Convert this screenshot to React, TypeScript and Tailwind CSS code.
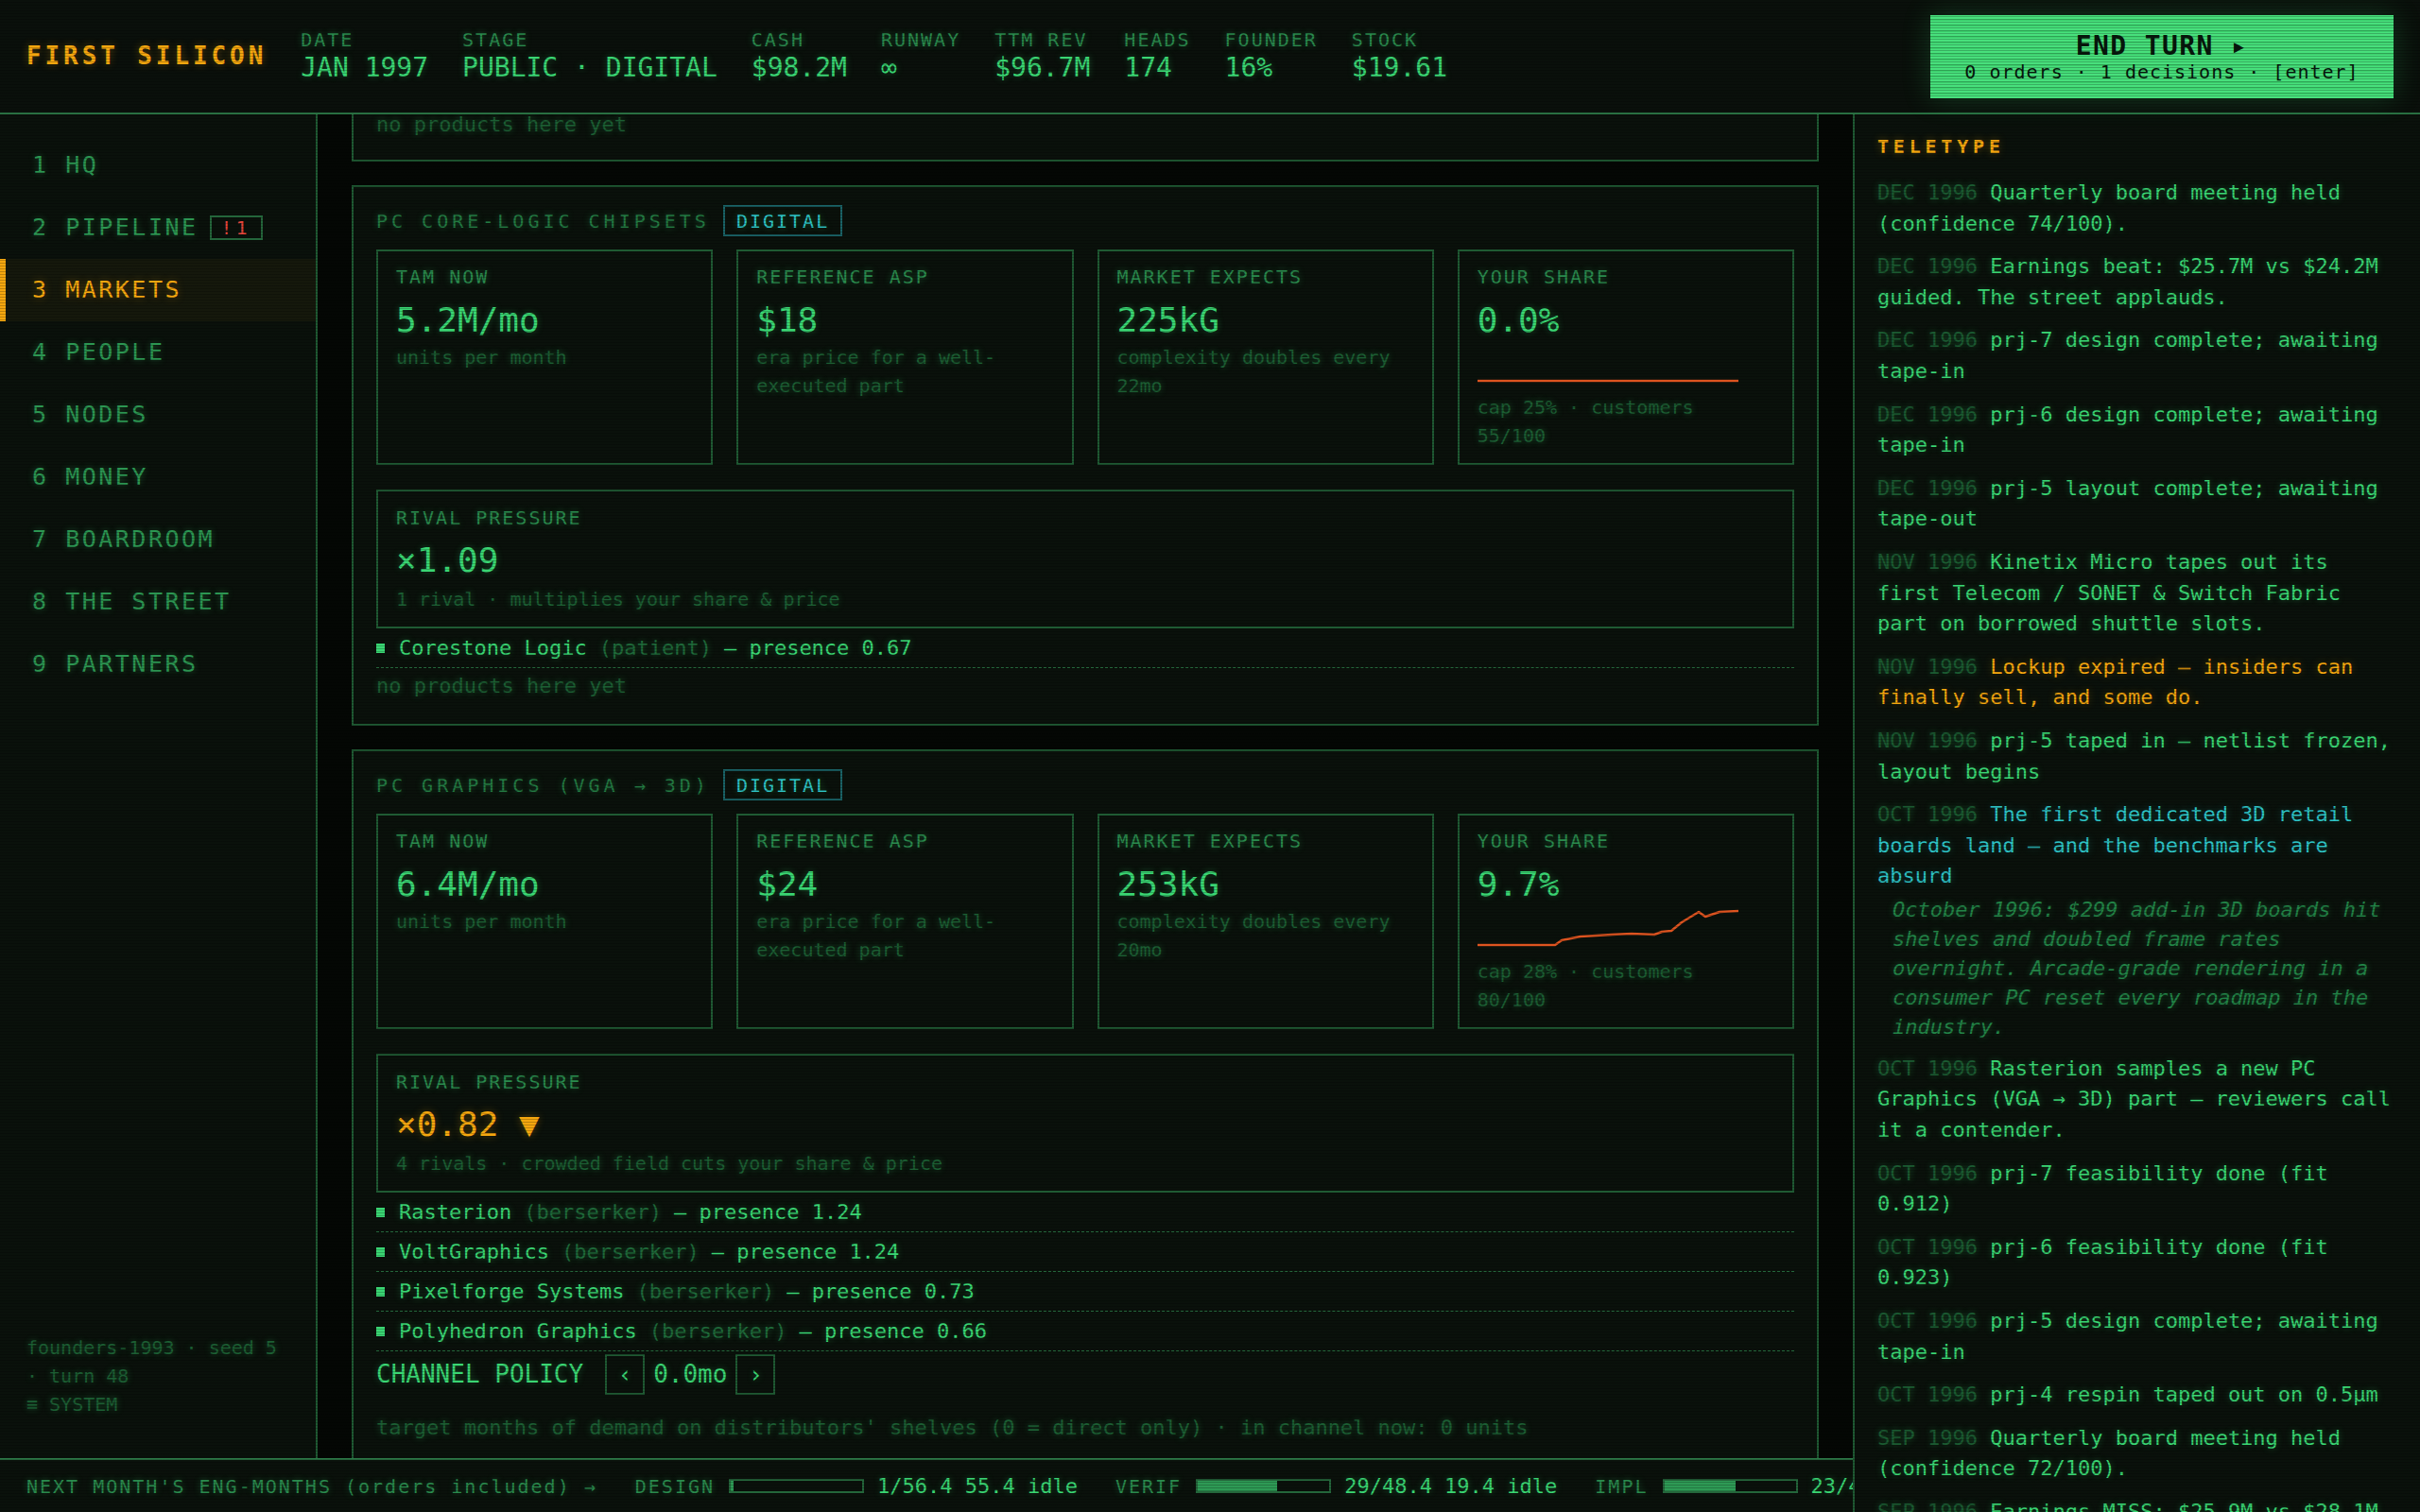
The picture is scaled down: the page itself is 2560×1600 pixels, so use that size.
import React from "react";

const headerStats = [
  { label: "DATE", value: "JAN 1997" },
  { label: "STAGE", value: "PUBLIC · DIGITAL" },
  { label: "CASH", value: "$98.2M" },
  { label: "RUNWAY", value: "∞" },
  { label: "TTM REV", value: "$96.7M" },
  { label: "HEADS", value: "174" },
  { label: "FOUNDER", value: "16%" },
  { label: "STOCK", value: "$19.61" },
];

const navItems = [
  "HQ",
  "PIPELINE",
  "MARKETS",
  "PEOPLE",
  "NODES",
  "MONEY",
  "BOARDROOM",
  "THE STREET",
  "PARTNERS",
];

type Tone = "ok" | "warn" | "info";

const teletype: { date: string; text: string; tone?: Tone; note?: string }[] = [
  { date: "DEC 1996", text: "Quarterly board meeting held (confidence 74/100)." },
  { date: "DEC 1996", text: "Earnings beat: $25.7M vs $24.2M guided. The street applauds." },
  { date: "DEC 1996", text: "prj-7 design complete; awaiting tape-in" },
  { date: "DEC 1996", text: "prj-6 design complete; awaiting tape-in" },
  { date: "DEC 1996", text: "prj-5 layout complete; awaiting tape-out" },
  {
    date: "NOV 1996",
    text: "Kinetix Micro tapes out its first Telecom / SONET & Switch Fabric part on borrowed shuttle slots.",
  },
  { date: "NOV 1996", text: "Lockup expired — insiders can finally sell, and some do.", tone: "warn" },
  { date: "NOV 1996", text: "prj-5 taped in — netlist frozen, layout begins" },
  {
    date: "OCT 1996",
    text: "The first dedicated 3D retail boards land — and the benchmarks are absurd",
    tone: "info",
    note: "October 1996: $299 add-in 3D boards hit shelves and doubled frame rates overnight. Arcade-grade rendering in a consumer PC reset every roadmap in the industry.",
  },
  {
    date: "OCT 1996",
    text: "Rasterion samples a new PC Graphics (VGA → 3D) part — reviewers call it a contender.",
  },
  { date: "OCT 1996", text: "prj-7 feasibility done (fit 0.912)" },
  { date: "OCT 1996", text: "prj-6 feasibility done (fit 0.923)" },
  { date: "OCT 1996", text: "prj-5 design complete; awaiting tape-in" },
  { date: "OCT 1996", text: "prj-4 respin taped out on 0.5µm" },
  { date: "SEP 1996", text: "Quarterly board meeting held (confidence 72/100)." },
  { date: "SEP 1996", text: "Earnings MISS: $25.9M vs $28.1M guided. Shares slide." },
];

type Rival = { name: string; style: string; presence: string };

type Market = {
  title: string;
  tam: string;
  asp: string;
  expects: string;
  doubles: string;
  share: string;
  points: string;
  cap: string;
  customers: string;
  pressure: string;
  pressureSub: string;
  pressureWarn?: boolean;
  rivals: Rival[];
  hasProducts: boolean;
};

const markets: Market[] = [
  {
    title: "PC CORE-LOGIC CHIPSETS",
    tam: "5.2M/mo",
    asp: "$18",
    expects: "225kG",
    doubles: "22mo",
    share: "0.0%",
    points: "0,42 276,42",
    cap: "25%",
    customers: "55/100",
    pressure: "×1.09",
    pressureSub: "1 rival · multiplies your share & price",
    rivals: [{ name: "Corestone Logic", style: "patient", presence: "0.67" }],
    hasProducts: false,
  },
  {
    title: "PC GRAPHICS (VGA → 3D)",
    tam: "6.4M/mo",
    asp: "$24",
    expects: "253kG",
    doubles: "20mo",
    share: "9.7%",
    points:
      "0,42 82,42 89,37 109,33 142,31 163,30 187,31 195,28 205,27 216,18 234,7 241,12 256,7 276,6",
    cap: "28%",
    customers: "80/100",
    pressure: "×0.82 ▼",
    pressureSub: "4 rivals · crowded field cuts your share & price",
    pressureWarn: true,
    rivals: [
      { name: "Rasterion", style: "berserker", presence: "1.24" },
      { name: "VoltGraphics", style: "berserker", presence: "1.24" },
      { name: "Pixelforge Systems", style: "berserker", presence: "0.73" },
      { name: "Polyhedron Graphics", style: "berserker", presence: "0.66" },
    ],
    hasProducts: true,
  },
];

function StatBox({ label, value, children }: { label: string; value: string; children: React.ReactNode }) {
  return (
    <div className="h-[228px] border-2 border-[#1f5a33] pl-[19px] pr-[24px] pt-[17px]">
      <div className="text-[20px] leading-[20px] tracking-[0.1em] text-[#2a8a4d]">{label}</div>
      <div className="mt-[14px] text-[36px] leading-[44px] text-[#3ad673]">{value}</div>
      {children}
    </div>
  );
}

function Sub({ children, className = "" }: { children: React.ReactNode; className?: string }) {
  return <div className={`text-[20px] leading-[30px] text-[#1c5e33] ${className}`}>{children}</div>;
}

function MarketCard({ m }: { m: Market }) {
  return (
    <div className="border-2 border-[#1f5a33] bg-[#0a110b] px-[24px] pt-[19px] pb-[24px]">
      <div className="mb-[14px] flex h-[33px] items-center gap-[14px]">
        <span className="text-[20px] tracking-[0.2em] text-[#237a42]">{m.title}</span>
        <span className="flex h-[33px] items-center border-2 border-[#1a6468] px-[12px] text-[20px] tracking-[0.1em] text-[#2ec4c6]">
          DIGITAL
        </span>
      </div>

      <div className="grid grid-cols-4 gap-[25px]">
        <StatBox label="TAM NOW" value={m.tam}>
          <Sub className="mt-[2px]">units per month</Sub>
        </StatBox>
        <StatBox label="REFERENCE ASP" value={m.asp}>
          <Sub className="mt-[2px]">era price for a well-executed part</Sub>
        </StatBox>
        <StatBox label="MARKET EXPECTS" value={m.expects}>
          <Sub className="mt-[2px]">complexity doubles every {m.doubles}</Sub>
        </StatBox>
        <StatBox label="YOUR SHARE" value={m.share}>
          <svg width="276" height="44" className="block">
            <polyline
              points={m.points}
              fill="none"
              stroke="#dd5420"
              strokeWidth="2.5"
              strokeLinejoin="round"
            />
          </svg>
          <Sub className="mt-[11px]">
            cap {m.cap} · customers {m.customers}
          </Sub>
        </StatBox>
      </div>

      <div className="mt-[26px] h-[147px] border-2 border-[#1f5a33] pl-[19px] pt-[18px]">
        <div className="text-[20px] leading-[20px] tracking-[0.1em] text-[#2a8a4d]">RIVAL PRESSURE</div>
        <div
          className={`mt-[13px] text-[36px] leading-[44px] ${
            m.pressureWarn ? "text-[#f5a70f] [text-shadow:0_0_8px_rgba(245,167,15,0.35)]" : "text-[#3ad673]"
          }`}
        >
          {m.pressure}
        </div>
        <Sub className="mt-[4px]">{m.pressureSub}</Sub>
      </div>

      {m.rivals.map((r) => (
        <div
          key={r.name}
          className="flex items-center border-b border-dashed border-[#24663b] py-[4px] text-[22px] leading-[33px] text-[#3ad673]"
        >
          <span className="mr-[15px] inline-block h-[10px] w-[9px] bg-[#3ad673]" />
          <span>{r.name}</span>
          <span className="ml-[13px] text-[#1f6a3a]">({r.style})</span>
          <span className="ml-[13px]">— presence {r.presence}</span>
        </div>
      ))}

      {m.hasProducts ? (
        <>
          <div className="mt-[3px] flex h-[43px] items-center text-[#3ad673]">
            <span className="text-[26px]">CHANNEL POLICY</span>
            <span className="ml-[23px] flex h-[43px] w-[42px] items-center justify-center border-2 border-[#1f5a33] text-[24px]">
              ‹
            </span>
            <span className="mx-[9px] text-[26px]">0.0mo</span>
            <span className="flex h-[43px] w-[42px] items-center justify-center border-2 border-[#1f5a33] text-[24px]">
              ›
            </span>
          </div>
          <div className="mt-[18px] text-[22px] leading-[33px] text-[#1c5e33]">
            target months of demand on distributors' shelves (0 = direct only) · in channel now: 0 units
          </div>
          <div className="mt-[20px] text-[22px] leading-[33px] text-[#1c5e33]">no products shipping here yet</div>
        </>
      ) : (
        <div className="pt-[2px] text-[22px] leading-[33px] text-[#1c5e33]">no products here yet</div>
      )}
    </div>
  );
}

function EngBar({ label, pct, text }: { label: string; pct: number; text: string }) {
  return (
    <div className="flex items-center">
      <span className="text-[20px] tracking-[0.1em] text-[#2a8a4d]">{label}</span>
      <div className="ml-[15px] h-[15px] w-[143px] border-2 border-[#24663b]">
        <div className="h-full bg-[#2e9a55]" style={{ width: `${pct}%` }} />
      </div>
      <span className="ml-[14px] text-[22px] text-[#3ad673]">{text}</span>
    </div>
  );
}

export default function App() {
  return (
    <div className="relative flex h-screen w-full flex-col overflow-hidden bg-[#0a110b] font-['DejaVu_Sans_Mono',monospace] [text-shadow:0_0_7px_rgba(58,214,115,0.35)]">
      {/* top status strip */}
      <header className="flex h-[121px] shrink-0 items-center gap-[36px] border-b-2 border-[#2d7a48] bg-[#0a100b] px-[28px]">
        <div className="text-[26px] font-bold tracking-[0.15em] text-[#f5a70f] [text-shadow:0_0_8px_rgba(245,167,15,0.35)]">
          FIRST SILICON
        </div>
        {headerStats.map((s) => (
          <div key={s.label} className="flex flex-col">
            <span className="text-[20px] leading-[24px] tracking-[0.1em] text-[#2a8a4d]">{s.label}</span>
            <span className="mt-[1px] text-[28px] leading-[34px] text-[#3ad673]">{s.value}</span>
          </div>
        ))}
        <div className="ml-auto flex h-[88px] w-[490px] flex-col items-center justify-center pt-[3px] text-[#07170c] shadow-[0_0_30px_rgba(61,220,120,0.22)] [background-image:repeating-linear-gradient(to_bottom,#48e07c_0px,#48e07c_4px,#3bcf6c_4px,#3bcf6c_6px)] [text-shadow:none]">
          <span className="text-[28px] font-bold leading-[30px] tracking-[0.05em]">END TURN ▸</span>
          <span className="text-[20px] leading-[24px] tracking-[0.05em]">0 orders · 1 decisions · [enter]</span>
        </div>
      </header>

      <div className="flex min-h-0 flex-1">
        <div className="flex min-w-0 flex-1 flex-col">
          <div className="flex min-h-0 flex-1">
            {/* nav */}
            <nav className="flex w-[336px] shrink-0 flex-col border-r-2 border-[#1f5a33] pt-[21px]">
              {navItems.map((item, i) => {
                const active = item === "MARKETS";
                return (
                  <div
                    key={item}
                    className={`flex h-[66px] items-center text-[25px] tracking-[0.1em] ${
                      active
                        ? "border-l-[6px] border-[#f5a70f] bg-[#15180c] pl-[28px] text-[#f5a70f] [text-shadow:0_0_8px_rgba(245,167,15,0.35)]"
                        : "pl-[34px] text-[#2c9652]"
                    }`}
                  >
                    <span>
                      {i + 1} {item}
                    </span>
                    {item === "PIPELINE" && (
                      <span className="ml-[12px] flex h-[26px] w-[56px] items-center justify-center border-2 border-[#24663b] text-[20px] tracking-[0.2em] text-[#e5463b] [text-shadow:none]">
                        !1
                      </span>
                    )}
                  </div>
                );
              })}
              <div className="mt-auto px-[28px] pb-[42px] text-[20px] leading-[30px] text-[#1c5e33]">
                <div>founders-1993 · seed 5 · turn 48</div>
                <div>≡ SYSTEM</div>
              </div>
            </nav>

            {/* markets */}
            <main className="flex min-w-0 flex-1 flex-col gap-[25px] overflow-hidden bg-[#040704] px-[36px]">
              <div className="shrink-0 border-2 border-t-0 border-[#1f5a33] bg-[#0a110b] px-[24px] pb-[21px]">
                <div className="-mt-[6px] text-[22px] leading-[33px] text-[#1c5e33]">no products here yet</div>
              </div>
              {markets.map((m) => (
                <div key={m.title} className="shrink-0">
                  <MarketCard m={m} />
                </div>
              ))}
            </main>
          </div>

          {/* eng months strip */}
          <div className="flex h-[57px] shrink-0 items-center gap-[40px] overflow-hidden whitespace-nowrap border-t-2 border-[#2d7a48] px-[28px]">
            <span className="text-[20px] tracking-[0.1em] text-[#2a8a4d]">
              NEXT MONTH'S ENG-MONTHS (orders included) →
            </span>
            <EngBar label="DESIGN" pct={2} text="1/56.4 55.4 idle" />
            <EngBar label="VERIF" pct={60} text="29/48.4 19.4 idle" />
            <EngBar label="IMPL" pct={54} text="23/42.6 19.6 idle" />
          </div>
        </div>

        {/* teletype */}
        <aside className="w-[600px] shrink-0 overflow-hidden border-l-2 border-[#1f5a33] px-[24px] pt-[22px]">
          <div className="text-[20px] font-bold leading-[24px] tracking-[0.24em] text-[#f5a70f] [text-shadow:0_0_8px_rgba(245,167,15,0.35)]">
            TELETYPE
          </div>
          <div className="mt-[21px] flex flex-col gap-[13px]">
            {teletype.map((e, i) => (
              <div key={i} className="text-[22px] leading-[32.6px]">
                <span className="text-[#1b5a31]">{e.date}</span>{" "}
                <span
                  className={
                    e.tone === "warn"
                      ? "text-[#f5a70f] [text-shadow:0_0_8px_rgba(245,167,15,0.3)]"
                      : e.tone === "info"
                        ? "text-[#2ec4c6] [text-shadow:0_0_8px_rgba(46,196,198,0.3)]"
                        : "text-[#3ad673]"
                  }
                >
                  {e.text}
                </span>
                {e.note && (
                  <div className="mt-[3px] ml-[16px] italic leading-[31px] text-[#228447]">{e.note}</div>
                )}
              </div>
            ))}
          </div>
        </aside>
      </div>

      <div className="pointer-events-none absolute inset-0 [background-image:repeating-linear-gradient(to_bottom,transparent_0px,transparent_2px,rgba(0,0,0,0.22)_2px,rgba(0,0,0,0.22)_3px)]" />
    </div>
  );
}
